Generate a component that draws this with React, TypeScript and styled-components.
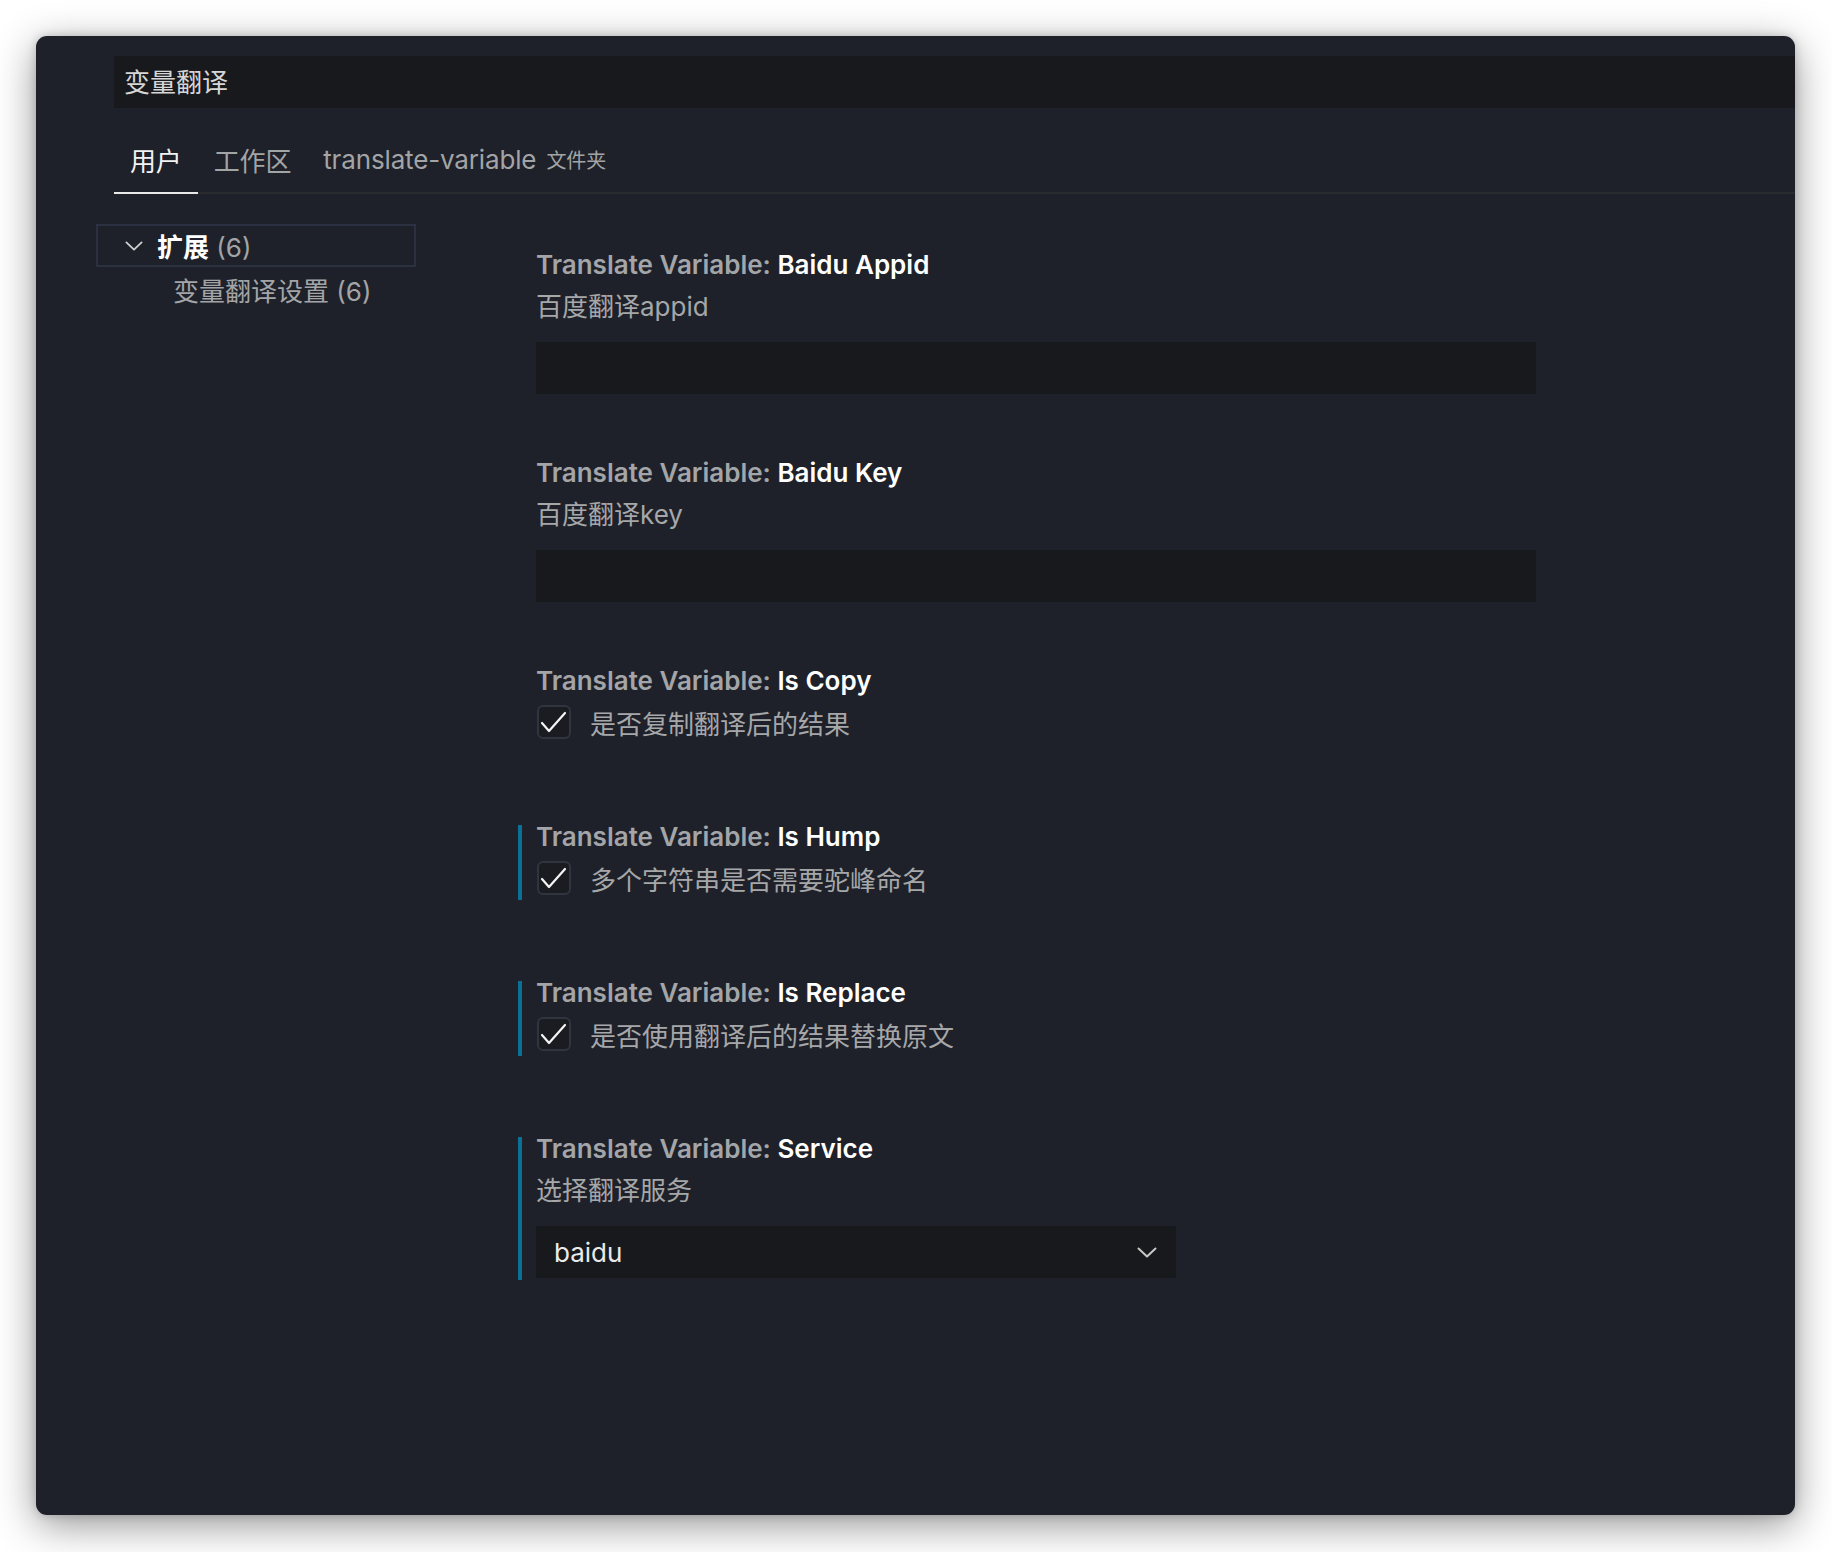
import React from "react";
import styled, { createGlobalStyle } from "styled-components";

const Global = createGlobalStyle`
  html, body { margin: 0; padding: 0; background: #ffffff; }
  body { font-family: "Inter", "Noto Sans CJK SC", sans-serif; -webkit-font-smoothing: antialiased; }
  * { box-sizing: border-box; }
`;

const Page = styled.div`
  width: 1832px;
  height: 1552px;
  padding: 36px 37px 37px 36px;
  background: #ffffff;
`;

const Window = styled.div`
  width: 1759px;
  height: 1479px;
  background: #1e2129;
  border-radius: 11px;
  box-shadow: 0 10px 40px rgba(0, 0, 0, 0.42), 0 0 10px rgba(0, 0, 0, 0.18);
  padding-top: 20px;
  overflow: hidden;
  display: flex;
  flex-direction: column;
`;

const SearchBar = styled.div`
  margin-left: 78px;
  height: 52px;
  background: #18191d;
  display: flex;
  align-items: center;
  padding: 0 0 4px 10px;
  font-size: 26px;
  color: #d6d6d6;
`;

const TabBar = styled.div`
  margin-left: 78px;
  margin-top: 22px;
  display: flex;
  align-items: stretch;
  border-bottom: 2px solid #2a2b2f;
`;

const Tab = styled.div<{ $active?: boolean }>`
  position: relative;
  height: 62px;
  padding: 0 16px 4px;
  display: flex;
  align-items: center;
  gap: 10px;
  font-size: 26px;
  letter-spacing: -0.15px;
  color: ${(p) => (p.$active ? "#f2f2f2" : "#a3a4a6")};
  ${(p) =>
    p.$active &&
    `&::after { content: ""; position: absolute; left: 0; right: 0; bottom: -2px; height: 2px; background: #e8e8e8; }`}
`;

const TabHint = styled.span`
  font-size: 20px;
  letter-spacing: 0;
  color: #a3a4a6;
`;

const Body = styled.div`
  display: flex;
  padding: 30px 0 0 60px;
  flex: 1;
`;

const Sidebar = styled.div`
  width: 320px;
  flex-shrink: 0;
  display: flex;
  flex-direction: column;
`;

const TreeRow = styled.div`
  height: 43px;
  border: 2px solid #2c3142;
  display: flex;
  align-items: center;
  padding-left: 27px;
  gap: 14px;
  font-size: 26px;
`;

const TreeLabel = styled.span`
  color: #ffffff;
  font-weight: 700;
`;

const TreeCount = styled.span`
  color: #a3a4a6;
  font-weight: 400;
`;

const SubRow = styled.div`
  height: 44px;
  display: flex;
  align-items: center;
  padding-left: 77px;
  font-size: 26px;
  color: #a3a4a6;
`;

const Content = styled.div`
  margin-left: 102px;
  padding-top: 20px;
  display: flex;
  flex-direction: column;
`;

const SettingItem = styled.div<{ $modified?: boolean; $gap: number }>`
  position: relative;
  padding-left: 18px;
  margin-bottom: ${(p) => p.$gap}px;
  display: flex;
  flex-direction: column;
  ${(p) =>
    p.$modified &&
    `&::before { content: ""; position: absolute; left: 0; top: 9px; bottom: -2px; width: 4px; background: #0b6f96; }`}
`;

const Title = styled.div`
  font-size: 26px;
  line-height: 42px;
  font-weight: 600;
  color: #a4a5a8;
`;

const TitleName = styled.span`
  color: #ffffff;
`;

const Desc = styled.div`
  font-size: 26px;
  line-height: 42px;
  color: #a6a7a9;
`;

const TextInput = styled.div`
  margin-top: 14px;
  width: 1000px;
  height: 52px;
  background: #18191c;
`;

const CheckRow = styled.div`
  display: flex;
  align-items: center;
  height: 40px;
  gap: 19px;
  font-size: 26px;
  color: #a6a7a9;
`;

const CheckBox = styled.div`
  width: 34px;
  height: 34px;
  border: 2px solid #30343f;
  border-radius: 6px;
  background: #1a1c21;
  display: flex;
  align-items: center;
  justify-content: center;
  margin-left: 1px;
`;

const Select = styled.div`
  margin-top: 14px;
  width: 640px;
  height: 52px;
  background: #18191c;
  display: flex;
  align-items: center;
  justify-content: space-between;
  padding: 0 19px 0 18px;
  font-size: 26px;
  color: #eaeaea;
`;

type Setting = {
  name: string;
  desc: string;
  kind: "text" | "bool" | "select";
  value?: string;
  modified?: boolean;
};

const settings: Setting[] = [
  { name: "Baidu Appid", desc: "百度翻译appid", kind: "text" },
  { name: "Baidu Key", desc: "百度翻译key", kind: "text" },
  { name: "Is Copy", desc: "是否复制翻译后的结果", kind: "bool" },
  { name: "Is Hump", desc: "多个字符串是否需要驼峰命名", kind: "bool", modified: true },
  { name: "Is Replace", desc: "是否使用翻译后的结果替换原文", kind: "bool", modified: true },
  { name: "Service", desc: "选择翻译服务", kind: "select", value: "baidu", modified: true },
];

const Chevron = ({ w, h, color, sw }: { w: number; h: number; color: string; sw: number }) => (
  <svg width={w} height={h} viewBox={`0 0 ${w} ${h}`} fill="none">
    <polyline
      points={`${sw / 2 + 0.5},${sw / 2 + 0.5} ${w / 2},${h - sw / 2 - 0.5} ${w - sw / 2 - 0.5},${sw / 2 + 0.5}`}
      stroke={color}
      strokeWidth={sw}
      strokeLinecap="round"
      strokeLinejoin="round"
    />
  </svg>
);

const Check = () => (
  <svg width="30" height="30" viewBox="0 0 30 30" fill="none">
    <polyline points="3,16 10,24 26,6" stroke="#f4f4f4" strokeWidth="2.2" strokeLinecap="round" strokeLinejoin="round" />
  </svg>
);

export default function App() {
  return (
    <>
      <Global />
      <Page>
        <Window>
          <SearchBar>变量翻译</SearchBar>
          <TabBar>
            <Tab $active>用户</Tab>
            <Tab>工作区</Tab>
            <Tab>
              translate-variable<TabHint>文件夹</TabHint>
            </Tab>
          </TabBar>
          <Body>
            <Sidebar>
              <TreeRow>
                <Chevron w={18} h={10} color="#d0d0d0" sw={1.8} />
                <span>
                  <TreeLabel>扩展</TreeLabel> <TreeCount>(6)</TreeCount>
                </span>
              </TreeRow>
              <SubRow>变量翻译设置 (6)</SubRow>
            </Sidebar>
            <Content>
              {settings.map((s) => (
                <SettingItem key={s.name} $modified={s.modified} $gap={s.kind === "bool" ? 74 : 58}>
                  <Title>
                    Translate Variable: <TitleName>{s.name}</TitleName>
                  </Title>
                  {s.kind === "bool" ? (
                    <CheckRow>
                      <CheckBox>
                        <Check />
                      </CheckBox>
                      {s.desc}
                    </CheckRow>
                  ) : (
                    <Desc>{s.desc}</Desc>
                  )}
                  {s.kind === "text" && <TextInput />}
                  {s.kind === "select" && (
                    <Select>
                      <span>{s.value}</span>
                      <Chevron w={20} h={11} color="#c8c8c8" sw={2} />
                    </Select>
                  )}
                </SettingItem>
              ))}
            </Content>
          </Body>
        </Window>
      </Page>
    </>
  );
}
